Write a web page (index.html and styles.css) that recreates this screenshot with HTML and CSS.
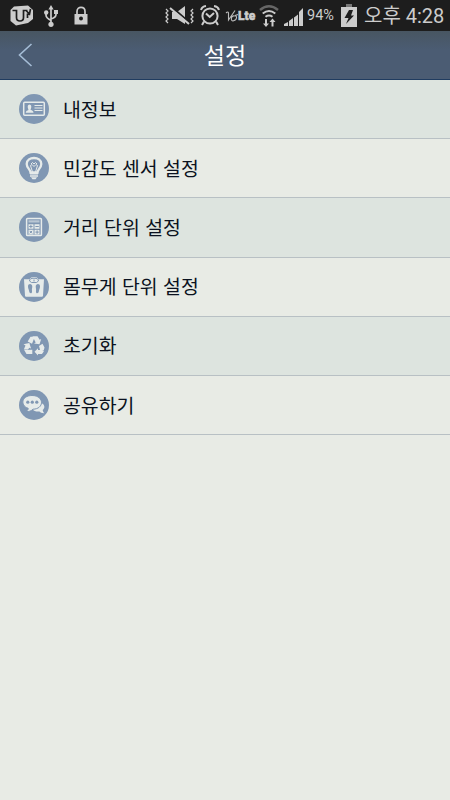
FILE: index.html
```
<!DOCTYPE html>
<html lang="ko">
<head>
    <meta charset="UTF-8">
    <title>설정</title>
    <link rel="stylesheet" href="styles.css">
</head>
<body>
    <div class="status-bar">
        <div class="status-left">
            <svg class="icon-carrier" width="24" height="22" viewBox="0 0 24 22">
                <path fill="#ccc" d="M4 1.500 18 .5l5 4.500v9L18 18 6 20.500 .5 16V5z"/>
                <path fill="none" stroke="#1d1d1d" stroke-width="1.700" d="M2.500 5.500h4v7q0 3.500 3.500 3.500t3.500-3.500V5.500h4M17.500 13V8.500M16.500 6l3 3 1-5"/>
            </svg>
            <svg class="icon-usb" width="14" height="22" viewBox="0 0 14 22">
                <path fill="none" stroke="#ccc" stroke-width="1.700" d="M7 3v16M2 7.500v2.500q0 3 5 5.500M12 6.500v3q0 3-5 4.500"/>
                <path fill="#ccc" d="M7 0l2.600 4.500H4.400zM10 5h4v4h-4z"/>
                <circle cx="2.200" cy="7.500" r="2.200" fill="#ccc"/>
                <circle cx="7" cy="19.300" r="2.600" fill="#ccc"/>
            </svg>
            <svg class="icon-lock" width="14" height="19" viewBox="0 0 14 19">
                <path fill="none" stroke="#ccc" stroke-width="1.700" d="M3 9V5.500C3 0 11 0 11 5.500V9"/>
                <path fill="#ccc" d="M.5 8h13v10.500H.5z"/>
                <circle cx="7" cy="12.500" r="2" fill="#1d1d1d"/>
            </svg>
        </div>
        <div class="status-right">
            <svg class="icon-mute" width="29" height="20" viewBox="0 0 29 20">
                <path fill="#ccc" d="M7 6h5l8-6v18l-8-5H7z"/>
                <path stroke="#1d1d1d" stroke-width="2" d="M6 .5l18 15.500"/>
                <path stroke="#ccc" stroke-width="2" d="M5 2l19 16"/>
                <path fill="none" stroke="#ccc" stroke-width="1.200" d="M1 3l2 2-2 2 2 2-2 2 2 2-2 2 2 2M28 3l-2 2 2 2-2 2 2 2-2 2 2 2-2 2"/>
            </svg>
            <svg class="icon-alarm" width="20" height="21" viewBox="0 0 20 21">
                <circle cx="10" cy="11" r="7.600" fill="none" stroke="#ccc" stroke-width="2"/>
                <path fill="none" stroke="#ccc" stroke-width="2" d="M6 8.500l3.700 3.500L14 8M4 16.500l-2 3.500M16 16.500l2 3.500M1 5q1-3.500 5-4M19 5q-1-3.500-5-4"/>
            </svg>
            <div class="lte">
                <svg width="14" height="14" viewBox="0 0 14 14">
                    <path fill="none" stroke="#bbb" stroke-width="1.100" d="M1 4q2-2 2.500 0v7L10 1.500M9.500 7c-4-1-4 6-1 4.800 4-1 4-6 .5-4.800M10 6.500l3-1"/>
                </svg>
                <span>Lte</span>
            </div>
            <svg class="icon-wifi" width="20" height="22" viewBox="0 0 20 22">
                <path fill="none" stroke="#666" stroke-width="2.400" d="M1 5q9-7.500 18 0"/>
                <path fill="none" stroke="#ccc" stroke-width="1.900" d="M3.700 8.500q6.300-5 12.600 0M6.500 11.800q3.500-2.500 7 0"/>
                <path fill="#ccc" d="M7 22l-3-3.500h2V14h2v4.500h2zM13.500 13.500l3 3.500h-2v4.500h-2V17h-2z"/>
            </svg>
            <svg class="icon-signal" width="19" height="19" viewBox="0 0 19 19">
                <path fill="#ccc" d="M0 19v-2l4-2v4zM5 19v-5l4-3v8zM10 19v-8.500l4-3V19zM15 19V5l4-4v18z"/>
            </svg>
            <span class="percent">94%</span>
            <svg class="icon-battery" width="16" height="23" viewBox="0 0 16 23">
                <path fill="#777" d="M5 0h6v3H5z"/>
                <path fill="#ccc" d="M0 3h16v20H0z"/>
                <path fill="#1d1d1d" d="M8 6h4l-2 5.500h3L5 20l2.500-6H3.500z"/>
            </svg>
            <span class="clock">오후 4:28</span>
        </div>
    </div>

    <div class="header">
        <svg class="back" width="15" height="24" viewBox="0 0 15 24">
            <path fill="none" stroke="#a5bdd6" stroke-width="1.600" d="M13.500 1L1.500 12l12 11"/>
        </svg>
        <h1>설정</h1>
    </div>

    <ul class="menu">
        <li>
            <svg class="menu-icon" viewBox="0 0 30 30">
                <circle cx="15" cy="15" r="15"/>
                <rect class="line" x="4.700" y="8.200" width="20.600" height="13" rx="1"/>
                <path class="fill" d="M6.700 18.700q0-2.200 2.800-2.700-2-5.200 1-5.500 3 .3 1 5.500 3 .5 3 2.700z"/>
                <path class="thin" d="M15.500 11.500h8M15.500 14h8M15.500 16.500h8"/>
            </svg>
            <span>내정보</span>
        </li>
        <li>
            <svg class="menu-icon" viewBox="0 0 30 30">
                <circle cx="15" cy="15" r="15"/>
                <path class="line bulb" d="M11.500 19.500c0-3-3.800-4.500-3.800-8.500 0-8 14.600-8 14.600 0 0 4-3.800 5.500-3.800 8.500z"/>
                <path class="thin" d="M13.500 19l-2-6.500 1.500-1 2 2 2-2 1.500 1-2 6.500M12 11l1.500-1.500L15 11l1.500-1.500L18 11"/>
                <path class="fill" d="M11 19.800h8v1.700h-8zM11 22.200h8v1.500h-8zM12 24.300h6l-1.500 1.900h-3z"/>
            </svg>
            <span>민감도 센서 설정</span>
        </li>
        <li>
            <svg class="menu-icon" viewBox="0 0 30 30">
                <circle cx="15" cy="15" r="15"/>
                <rect class="line" x="7.600" y="6.500" width="14.800" height="17" rx=".8"/>
                <path class="fill" d="M9.500 12.200h5v4.600h-5zM15.500 12.200h5v4.600h-5zM9.500 17.800h5v4.600h-5zM15.500 17.800h5v4.600h-5z"/>
                <path class="band" d="M9.500 8.300h11v2.200h-11z"/>
                <path class="mark" d="M10.200 14.500h3.400M11.900 12.800v3.400M16.400 14.500h3.400M10.700 18.900l2.400 2.400M13.100 18.900l-2.400 2.400M16.400 20.100h3.400M18.100 18.400v3.400"/>
            </svg>
            <span>거리 단위 설정</span>
        </li>
        <li>
            <svg class="menu-icon" viewBox="0 0 30 30">
                <circle cx="15" cy="15" r="15"/>
                <path class="fill" d="M5 7.200h5.500q1-2.200 4.500-2.200t4.500 2.200H25l-1 16.500q-.2 1-1 1H7q-.8 0-1-1z"/>
                <path class="mark" d="M10.500 9q0-2.800 4.500-2.800T19.500 9l-2 1.500h-5zM15 9.500V7.500"/>
                <path class="foot" d="M9 14.500c0-3.500 4.500-3 4.300.3-.1 1.500-.6 2.500-.3 4.200.5 3-2.500 3-2.800.6-.2-2-1.200-3-1.200-5.100zM21 14.500c0-3.500-4.500-3-4.300.3.1 1.500.6 2.500.3 4.200-.5 3 2.500 3 2.800.6.2-2 1.200-3 1.200-5.100z"/>
            </svg>
            <span>몸무게 단위 설정</span>
        </li>
        <li>
            <svg class="menu-icon" viewBox="0 0 30 30">
                <circle cx="15" cy="15" r="15"/>
                <path class="fill" d="M8.700 10.500l2.800-4.700h4.300L13 12.800zM13.500 5.300h5l2.200 3.400 1.500-.8-1.700 5.300-5.500-.8 1.700-1zM20 15l3.500-2.200 2 3.700-.8 3h-3.500zM24.900 20.300L23 23h-4v1.500L15.500 20.800 19 17.300v1.600h3zM13.300 18.700V23H7.500l-2.300-4zM4.500 13.300l5.800-1.300 1.800 5.500-1.800-.8-1.300 1.800H4.800l1.700-4z"/>
            </svg>
            <span>초기화</span>
        </li>
        <li>
            <svg class="menu-icon" viewBox="0 0 30 30">
                <circle cx="15" cy="15" r="15"/>
                <path class="fill" d="M22.500 13.300c3.500 1.200 3.700 5 1.200 6.700.2 1.500.8 2.300 1.500 3.200-2.500 0-3.700-.8-4.700-1.700-3.200.3-5.800-.5-7-2.500z"/>
                <path class="bubble" d="M13 5.500c12.500 0 12.500 13.500 1 13.700-2 2-4 2.500-7 2.300 1.500-1 2.200-1.800 2.200-3.200C.8 15.500 2.500 5.500 13 5.500z"/>
                <g class="dots">
                    <circle cx="8.800" cy="12.200" r="1.600"/>
                    <circle cx="13.300" cy="12.200" r="1.600"/>
                    <circle cx="17.800" cy="12.200" r="1.600"/>
                </g>
            </svg>
            <span>공유하기</span>
        </li>
    </ul>
</body>
</html>
```
FILE: styles.css
```
body {
    margin: 0;
    min-height: 100vh;
    background-color: #e8ebe5;
    color: #0b1220;
    font-family: "Noto Sans CJK KR", sans-serif;
}

.status-bar {
    display: flex;
    justify-content: space-between;
    height: 31px;
    background-color: #1d1d1d;
    color: #ccc;
    overflow: hidden;
}

.status-left,
.status-right {
    display: flex;
    align-items: center;
}

.status-left {
    padding-left: 10px;
}

.icon-usb {
    margin-left: 10px;
}

.icon-lock {
    margin-left: 16px;
}

.status-right {
    padding-right: 6px;
}

.icon-alarm {
    margin-left: 6px;
}

.lte {
    display: flex;
    align-items: center;
    margin-left: 5px;
    width: 31px;
}

.lte span {
    margin-left: -1px;
    font: 900 12px/14px Roboto, sans-serif;
    -webkit-text-stroke: 0.5px #ccc;
}

.icon-wifi {
    margin-left: 3px;
}

.icon-signal {
    margin-left: 5px;
    margin-top: 2px;
}

.percent {
    margin-left: 4px;
    width: 29px;
    font: 14.5px/31px Roboto, sans-serif;
    white-space: nowrap;
}

.icon-battery {
    margin-left: 5px;
}

.clock {
    margin-left: 7px;
    width: 80px;
    padding-top: 2px;
    font: 20px/31px Roboto, "Noto Sans CJK KR", sans-serif;
    white-space: nowrap;
}

.header {
    display: grid;
    grid-template-columns: 1fr auto 1fr;
    align-items: center;
    height: 49px;
    box-sizing: border-box;
    background: linear-gradient(#485662, #4b5c73 40%);
    border-bottom: 1px solid #203c60;
}

.back {
    margin-left: 18px;
}

h1 {
    margin: 0;
    padding-bottom: 2px;
    font-size: 23px;
    line-height: 46px;
    font-weight: 400;
    color: #fff;
}

.menu {
    margin: 0;
    padding: 0;
    list-style: none;
}

.menu li {
    display: flex;
    align-items: center;
    height: 59.2px;
    box-sizing: border-box;
    padding-left: 19px;
    border-bottom: 1px solid #b8c0c4;
    font-size: 19.4px;
}

.menu li:nth-child(odd) {
    background-color: #dde4df;
}

.menu li span {
    padding-bottom: 2px;
}

.menu-icon {
    width: 30px;
    height: 30px;
    margin-right: 14px;
    fill: #8097b3;
}

.fill {
    fill: #e6ebea;
}

.line,
.thin {
    fill: none;
    stroke: #e6ebea;
    stroke-width: 1.5;
}

.bulb {
    stroke-width: 2.3;
}

.thin {
    stroke-width: 1;
}

.band {
    fill: #b9c6d3;
}

.mark {
    fill: none;
    stroke: #8097b3;
    stroke-width: 1;
}

.bubble {
    fill: #e6ebea;
    stroke: #8097b3;
    stroke-width: 1;
}
```
